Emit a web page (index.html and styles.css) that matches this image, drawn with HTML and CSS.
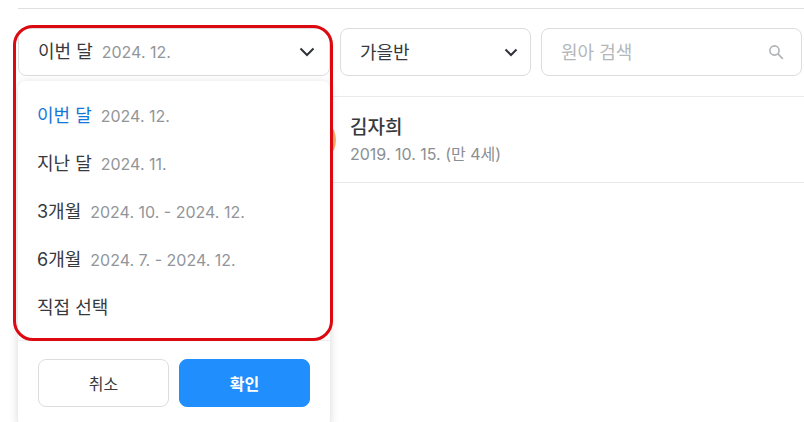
FILE: index.html
```html
<!DOCTYPE html>
<html lang="ko">
<head>
<meta charset="utf-8">
<meta name="viewport" content="width=device-width, initial-scale=1">
<title>원아</title>
<link rel="stylesheet" href="styles.css">
</head>
<body>
<main class="page">
  <div class="toolbar">
    <div class="period">
      <button class="field period-toggle" type="button" aria-expanded="true">
        <span class="label">이번 달</span>
        <span class="date">2024. 12.</span>
        <svg class="chevron" width="16" height="16" viewBox="0 0 16 16" aria-hidden="true"><path d="M1.500 4.500L8 11l6.500-6.500"/></svg>
      </button>
      <div class="menu">
        <ul class="options">
          <li><button class="option selected" type="button"><span class="label">이번 달</span><span class="date">2024. 12.</span></button></li>
          <li><button class="option" type="button"><span class="label">지난 달</span><span class="date">2024. 11.</span></button></li>
          <li><button class="option" type="button"><span class="label">3개월</span><span class="date">2024. 10. - 2024. 12.</span></button></li>
          <li><button class="option" type="button"><span class="label">6개월</span><span class="date">2024. 7. - 2024. 12.</span></button></li>
          <li><button class="option" type="button"><span class="label">직접 선택</span></button></li>
        </ul>
        <div class="actions">
          <button class="btn" type="button">취소</button>
          <button class="btn primary" type="button">확인</button>
        </div>
      </div>
      <div class="highlight"></div>
    </div>
    <div class="class-filter">
      <select class="field" aria-label="반"><option>가을반</option></select>
      <svg class="chevron small" width="14" height="14" viewBox="0 0 14 14" aria-hidden="true"><path d="M1.500 4.500L7 10l5.500-5.500"/></svg>
    </div>
    <div class="search">
      <input class="field" type="search" placeholder="원아 검색" aria-label="원아 검색">
      <svg class="search-icon" width="16" height="16" viewBox="0 0 16 16" aria-hidden="true"><circle cx="6.500" cy="6.500" r="4.600"/><path d="M9.900 9.900l5 5"/></svg>
    </div>
  </div>
  <ul class="children">
    <li class="child">
      <span class="avatar"></span>
      <div>
        <div class="name">김자희</div>
        <div class="birth">2019. 10. 15. (만 4세)</div>
      </div>
    </li>
  </ul>
</main>
</body>
</html>
```
FILE: styles.css
```css
* {
  box-sizing: border-box;
}

body {
  margin: 0;
  background: #fff;
  color: #36393d;
  font-family: Inter, "Noto Sans CJK KR", sans-serif;
  font-size: 18px;
}

button,
input,
select {
  font: inherit;
  color: inherit;
}

ul {
  margin: 0;
  padding: 0;
  list-style: none;
}

.page {
  min-height: 100vh;
  padding: 8px 0 0 18px;
  overflow: hidden;
}

.toolbar {
  display: grid;
  grid-template-columns: 312px 191px 1fr;
  gap: 10px;
  padding: 19px 2px 20px 0;
  border-top: 1px solid #dedfe1;
}

.field {
  width: 100%;
  height: 48px;
  padding: 0 19px;
  background: #fff;
  border: 1px solid #dcdde0;
  border-radius: 8px;
}

.period,
.class-filter,
.search {
  position: relative;
}

.period-toggle {
  display: flex;
  align-items: center;
  gap: 9px;
  padding-right: 14px;
  text-align: left;
}

.period-toggle .chevron {
  margin-left: auto;
}

.label,
.date {
  line-height: 24px;
}

.date {
  color: #929599;
  font-size: 16px;
}

.chevron {
  fill: none;
  stroke: #303338;
  stroke-width: 2;
}

.class-filter select {
  appearance: none;
}

.chevron.small {
  position: absolute;
  top: 17px;
  right: 13px;
}

.search input {
  appearance: none;
}

.search input::placeholder {
  color: #b4b7ba;
  opacity: 1;
}

.search-icon {
  position: absolute;
  top: 16px;
  right: 18px;
  fill: none;
  stroke: #b0b2b5;
  stroke-width: 1.600;
}

.menu {
  position: absolute;
  z-index: 1;
  top: 53px;
  left: 0;
  width: 100%;
  background: #fff;
  border-radius: 8px;
  box-shadow: 0 2px 10px rgba(0, 0, 0, 0.16);
}

.options {
  padding: 11px 0 8px;
}

.option {
  display: flex;
  align-items: center;
  gap: 9px;
  width: 100%;
  height: 48px;
  padding: 0 19px;
  background: none;
  border: 0;
}

.option.selected .label {
  color: #1578d9;
}

.actions {
  display: grid;
  grid-template-columns: 1fr 1fr;
  gap: 10px;
  padding: 18px 20px 20px;
  border-top: 1px solid #ededee;
}

.btn {
  height: 48px;
  padding: 0;
  background: #fff;
  border: 1px solid #dcdde0;
  border-radius: 8px;
  font-size: 16px;
}

.btn.primary {
  background: #208efc;
  border-color: #208efc;
  color: #fff;
  font-weight: 700;
}

.highlight {
  position: absolute;
  z-index: 2;
  top: -3px;
  left: -5px;
  right: -3px;
  height: 316px;
  border: 3px solid #dc0910;
  border-radius: 20px;
  pointer-events: none;
}

.child {
  display: flex;
  align-items: center;
  gap: 14px;
  height: 87px;
  padding-left: 270px;
  border: solid #e9eaeb;
  border-width: 1px 0;
}

.avatar {
  width: 48px;
  height: 48px;
  border-radius: 50%;
  background: #efb264;
}

.name {
  font-size: 19px;
  font-weight: 500;
  line-height: 28px;
}

.birth {
  color: #8b8e92;
  font-size: 16px;
  line-height: 24px;
}
```
